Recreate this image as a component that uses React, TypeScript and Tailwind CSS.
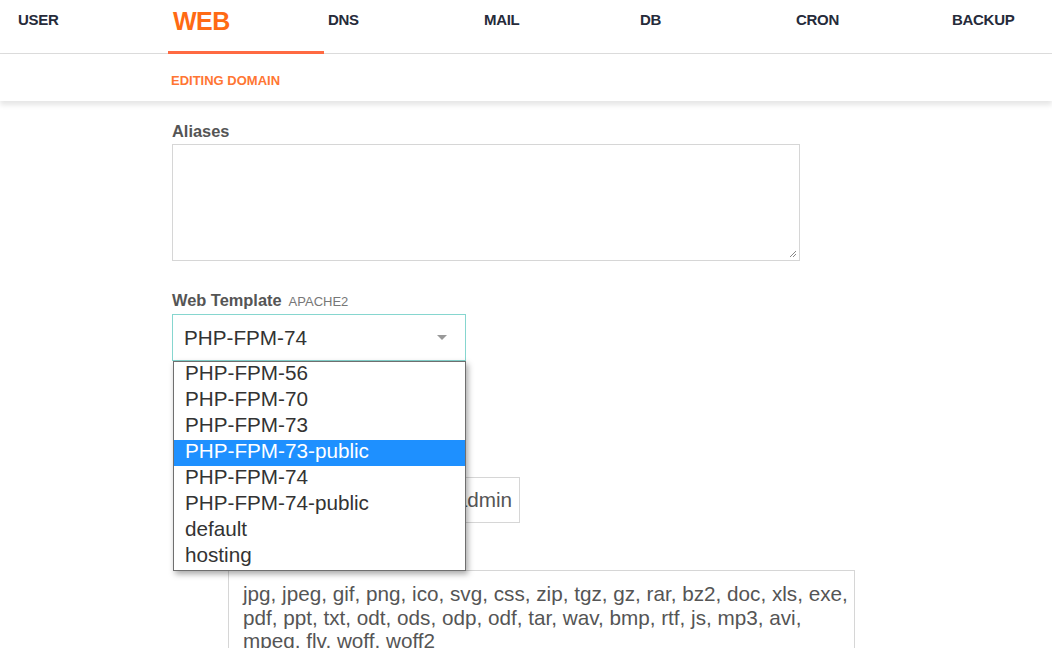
import React from "react";

const tabs = ["USER", "WEB", "DNS", "MAIL", "DB", "CRON", "BACKUP"];
const templates = [
  "PHP-FPM-56",
  "PHP-FPM-70",
  "PHP-FPM-73",
  "PHP-FPM-73-public",
  "PHP-FPM-74",
  "PHP-FPM-74-public",
  "default",
  "hosting",
];

export default function App() {
  return (
    <div
      className="w-[1052px] h-[648px] overflow-hidden bg-white text-[#333]"
      style={{ fontFamily: '"Liberation Sans", Arial, sans-serif' }}
    >
      {/* main navigation */}
      <div className="h-[54px] border-b border-[#dcdcdc] flex pl-[12px]">
        {tabs.map((t, i) =>
          t === "WEB" ? (
            <div key={t} className="w-[156px] shrink-0 relative">
              <span className="absolute left-[5px] top-[3px] text-[25px] font-bold text-[#ff6a14] tracking-[-0.5px]">
                {t}
              </span>
              <div className="absolute left-[0px] right-[0px] bottom-[-1px] h-[3px] bg-[#ff6a42]" />
            </div>
          ) : (
            <div
              key={t}
              className={
                (i === 0 ? "pl-[6px] " : "pl-[4px] ") +
                "w-[156px] shrink-0 pt-[9px] text-[15px] font-bold text-[#262b3a] tracking-[-0.3px]"
              }
            >
              {t}
            </div>
          )
        )}
      </div>

      {/* sub bar */}
      <div className="relative h-[47px] pl-[171px] pt-[14px] shadow-[0_4px_5px_rgba(0,0,0,0.10)]">
        <span className="text-[13px] font-bold text-[#ff7633]">EDITING DOMAIN</span>
      </div>

      {/* form */}
      <div className="pl-[172px] pt-[21px]">
        <div className="text-[16.4px] font-bold text-[#555] leading-[18px]">Aliases</div>
        <div className="relative mt-[4px] w-[628px] h-[117px] border border-[#d6d6d6]">
          <svg className="absolute right-[2px] bottom-[2px]" width="8" height="8" viewBox="0 0 8 8">
            <path d="M7 1 L1 7 M7 4 L4 7" stroke="#888" strokeWidth="1" />
          </svg>
        </div>

        <div className="mt-[30px] flex items-baseline gap-[7px] leading-[18px]">
          <span className="text-[16.4px] font-bold text-[#555]">Web Template</span>
          <span className="text-[13px] text-[#777]">APACHE2</span>
        </div>

        <div className="relative mt-[3px] w-[294px]">
          <div className="h-[47px] border border-[#86d6cf] flex items-center pl-[11px] pr-[18px] justify-between">
            <span className="text-[20.7px] text-[#333]">PHP-FPM-74</span>
            <svg width="10" height="6" viewBox="0 0 10 6">
              <path d="M0 0 L10 0 L5 5 Z" fill="#999" />
            </svg>
          </div>

          {/* open option list */}
          <div className="absolute z-10 left-[1px] top-[47px] w-[293px] bg-white border border-[#6f6f6f] shadow-[2px_3px_6px_rgba(0,0,0,0.35)]">
            {templates.map((o) => (
              <div
                key={o}
                className={
                  "h-[26px] pl-[11px] text-[20.7px] leading-[22px] " +
                  (o === "PHP-FPM-73-public" ? "bg-[#1e90ff] text-white" : "text-[#333]")
                }
              >
                {o}
              </div>
            ))}
          </div>
        </div>

        <div className="pl-[56px]">
          <div className="mt-[116px] w-[292px] h-[46px] border border-[#d6d6d6] flex items-center justify-end pr-[7px] text-[20.7px] text-[#555]">
            admin
          </div>
          <div className="mt-[47px] w-[627px] h-[120px] border border-[#d6d6d6] pl-[14px] pt-[11px] text-[20.7px] leading-[23.5px] text-[#555]">
            <div className="whitespace-nowrap">jpg, jpeg, gif, png, ico, svg, css, zip, tgz, gz, rar, bz2, doc, xls, exe,</div>
            <div className="whitespace-nowrap">pdf, ppt, txt, odt, ods, odp, odf, tar, wav, bmp, rtf, js, mp3, avi,</div>
            <div className="whitespace-nowrap">mpeg, flv, woff, woff2</div>
          </div>
        </div>
      </div>
    </div>
  );
}
